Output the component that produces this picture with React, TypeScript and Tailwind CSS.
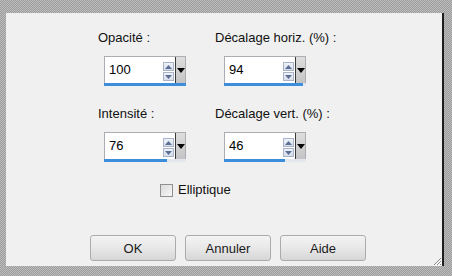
import React from 'react'

interface FieldProps {
  value: string
  fill: number
}

function SpinField({ value, fill }: FieldProps) {
  return (
    <div className="flex flex-col w-[82px]">
      <div className="flex h-[27px] border border-b-0 border-[#abadb3] bg-white">
        <span className="flex-1 pl-[4px] pt-[5px] leading-[16px] text-[#000]">{value}</span>
        <div className="flex flex-col gap-px pt-[5px] pr-px">
          <div className="w-[11px] h-[9px] border border-[#a9b4c8] bg-gradient-to-b from-[#eef2f8] to-[#d6deea] flex items-center justify-center">
            <svg width="7" height="4" viewBox="0 0 7 4"><path d="M3.5 0L7 4H0z" fill="#5d6f94" /></svg>
          </div>
          <div className="w-[11px] h-[9px] border border-[#a9b4c8] bg-gradient-to-b from-[#eef2f8] to-[#d6deea] flex items-center justify-center">
            <svg width="7" height="4" viewBox="0 0 7 4"><path d="M0 0H7L3.5 4z" fill="#5d6f94" /></svg>
          </div>
        </div>
        <div className="w-[10px] border-l border-[#3a3a3a] bg-gradient-to-b from-[#dedede] to-[#c4c4c4] flex justify-center pt-[11px]">
          <svg width="8" height="5" viewBox="0 0 8 5"><path d="M0 0H8L4 5z" fill="#000" /></svg>
        </div>
      </div>
      <div className="h-[3px] bg-[#e4e8ee]">
        <div className="h-full bg-[#3c8edb]" style={{ width: `${fill}%` }} />
      </div>
    </div>
  )
}

function Btn({ label }: { label: string }) {
  return (
    <button className="w-[86px] h-[26px] rounded-[3px] border border-[#acacac] bg-gradient-to-b from-[#f3f3f3] via-[#e8e8e8] to-[#d6d6d6] text-[13px] text-[#1a1a1a] leading-none">
      {label}
    </button>
  )
}

export default function App() {
  return (
    <div className="w-[452px] h-[276px] overflow-hidden bg-[repeating-conic-gradient(#9c9c9c_0%_25%,#bdbdbd_0%_50%)] bg-size-[2px_2px] pt-[13px] pl-[6px] pr-[8px] pb-[10px] font-['Liberation_Sans',Arial,sans-serif] text-[13px] text-[#111]">
      <div className="relative h-full bg-[#f0f0f0] border-r-2 border-[#1e1e1e] flex flex-col pt-[17px] pl-[92px]">
        <div className="grid grid-cols-[117px_auto] gap-y-[20px]">
          <div className="flex flex-col gap-[10px]">
            <span className="leading-[16px]">Opacité :</span>
            <div className="pl-[6px]"><SpinField value="100" fill={100} /></div>
          </div>
          <div className="flex flex-col gap-[10px]">
            <span className="leading-[16px]">Décalage horiz. (%) :</span>
            <div className="pl-[9px]"><SpinField value="94" fill={96} /></div>
          </div>
          <div className="flex flex-col gap-[10px]">
            <span className="leading-[16px]">Intensité :</span>
            <div className="pl-[6px]"><SpinField value="76" fill={77} /></div>
          </div>
          <div className="flex flex-col gap-[10px]">
            <span className="leading-[16px]">Décalage vert. (%) :</span>
            <div className="pl-[9px]"><SpinField value="46" fill={74} /></div>
          </div>
        </div>

        <label className="flex items-center gap-[5px] mt-[20px] ml-[62px] leading-[16px]">
          <span className="w-[13px] h-[13px] border border-[#8e8f8f] bg-gradient-to-br from-[#dcdcdc] to-[#f6f6f6]" />
          <span>Elliptique</span>
        </label>

        <div className="flex gap-[9px] mt-[37px] -ml-[8px]">
          <Btn label="OK" />
          <Btn label="Annuler" />
          <Btn label="Aide" />
        </div>

        <svg className="absolute right-0 bottom-0" width="10" height="10" viewBox="0 0 10 10">
          <path d="M9 2L2 9M9 5L5 9M9 8L8 9" stroke="#8a8a8a" strokeWidth="1" />
          <path d="M10 3L3 10M10 6L6 10" stroke="#ffffff" strokeWidth="1" />
        </svg>
      </div>
    </div>
  )
}
